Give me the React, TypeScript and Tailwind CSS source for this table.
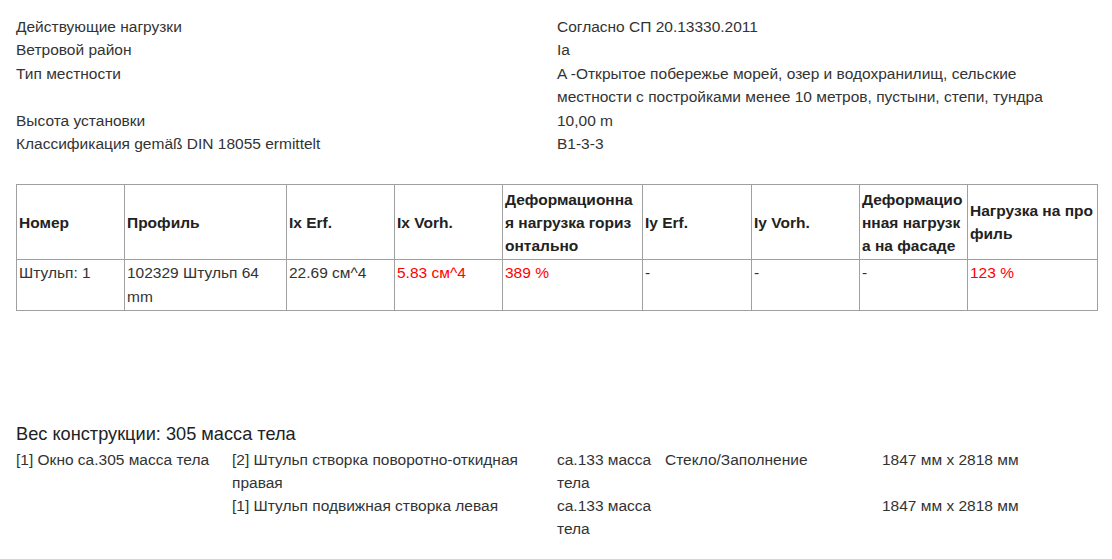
import React from "react";

const info: [string, React.ReactNode][] = [
  ["Действующие нагрузки", "Согласно СП 20.13330.2011"],
  ["Ветровой район", "Ia"],
  [
    "Тип местности",
    "A -Открытое побережье морей, озер и водохранилищ, сельские местности с постройками менее 10 метров, пустыни, степи, тундра",
  ],
  ["Высота установки", "10,00 m"],
  ["Классификация gemäß DIN 18055 ermittelt", "B1-3-3"],
];

const cols = [108, 162, 108, 108, 140, 109, 108, 108, 130];
const heads = [
  "Номер",
  "Профиль",
  "Ix Erf.",
  "Ix Vorh.",
  "Деформационная нагрузка горизонтально",
  "Iy Erf.",
  "Iy Vorh.",
  "Деформационная нагрузка на фасаде",
  "Нагрузка на профиль",
];
const body: [string, boolean][] = [
  ["Штульп: 1", false],
  ["102329 Штульп 64 mm", false],
  ["22.69 см^4", false],
  ["5.83 см^4", true],
  ["389 %", true],
  ["-", false],
  ["-", false],
  ["-", false],
  ["123 %", true],
];

export default function App() {
  return (
    <div
      className="w-[1112px] h-[559px] overflow-hidden bg-white text-[#333] px-4 pt-[15px]"
      style={{ fontFamily: '"Liberation Sans", Arial, sans-serif' }}
    >
      <div className="w-[1081px] text-[15.5px] leading-[23.4px]">
        {info.map(([k, v], i) => (
          <div key={i} className="grid grid-cols-[541px_1fr]">
            <div>{k}</div>
            <div className="pr-[40px]">{v}</div>
          </div>
        ))}
      </div>

      <table className="mt-[29px] w-[1081px] table-fixed border-collapse text-[15.5px] leading-[23px]">
        <colgroup>
          {cols.map((w, i) => (
            <col key={i} style={{ width: w }} />
          ))}
        </colgroup>
        <thead>
          <tr>
            {heads.map((h, i) => (
              <th
                key={i}
                className="border border-[#a0a0a0] px-[2px] py-[1px] h-[75px] text-left align-middle font-bold text-[#222] break-all"
              >
                {h}
              </th>
            ))}
          </tr>
        </thead>
        <tbody>
          <tr>
            {body.map(([t, red], i) => (
              <td
                key={i}
                className={`border border-[#a0a0a0] px-[2px] pt-[1px] pb-0 h-[51px] align-top ${
                  red ? "text-[#ff0000]" : "text-[#333]"
                }`}
              >
                <div className="leading-[24px]">{t}</div>
              </td>
            ))}
          </tr>
        </tbody>
      </table>

      <div className="mt-[110px] w-[1081px]">
        <div className="text-[18.2px] leading-[26px] text-[#222]">
          Вес конструкции: 305 масса тела
        </div>
        <div className="grid grid-cols-[216px_325px_108px_217px_1fr] text-[15.5px] leading-[23px] mt-[1px]">
          <div>[1] Окно ca.305 масса тела</div>
          <div>[2] Штульп створка поворотно-откидная правая</div>
          <div>ca.133 масса тела</div>
          <div>Стекло/Заполнение</div>
          <div>1847 мм x 2818 мм</div>
          <div></div>
          <div>[1] Штульп подвижная створка левая</div>
          <div>ca.133 масса тела</div>
          <div></div>
          <div>1847 мм x 2818 мм</div>
        </div>
      </div>
    </div>
  );
}
